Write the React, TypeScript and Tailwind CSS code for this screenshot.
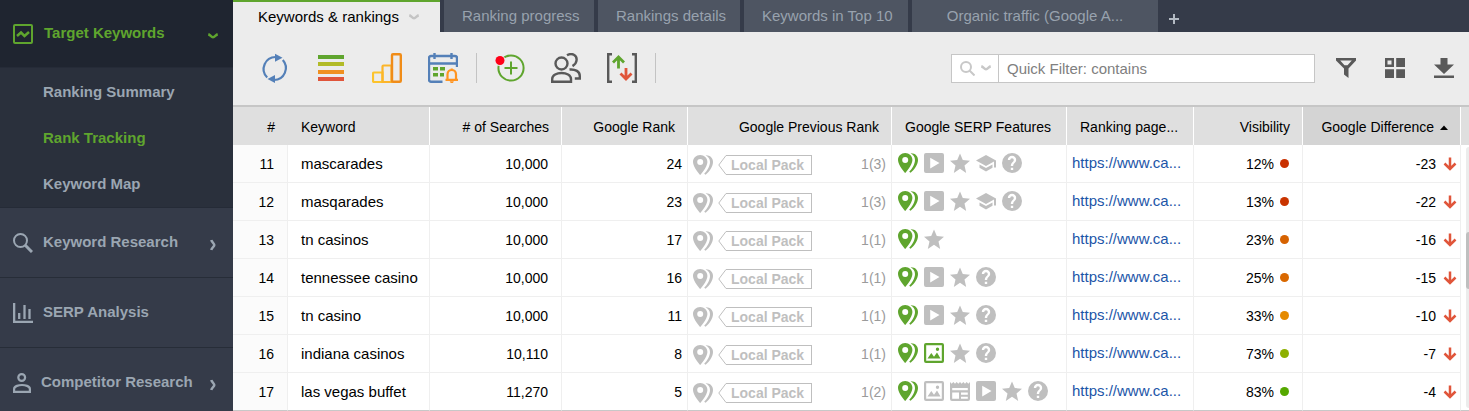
import { ReactNode } from "react";
import clsx from "clsx";

type Feature = "pins" | "image" | "news" | "video" | "star" | "school" | "help";

interface Row {
  id: number;
  keyword: string;
  searches: string;
  rank: number;
  previous: string;
  features: Feature[];
  active: Feature[];
  visibility: number;
  color: string;
  difference: number;
}

const rows: Row[] = [
  { id: 11, keyword: "mascarades", searches: "10,000", rank: 24, previous: "1(3)", features: ["pins", "video", "star", "school", "help"], active: ["pins"], visibility: 12, color: "bg-[#c93000]", difference: -23 },
  { id: 12, keyword: "masqarades", searches: "10,000", rank: 23, previous: "1(3)", features: ["pins", "video", "star", "school", "help"], active: ["pins"], visibility: 13, color: "bg-[#c93400]", difference: -22 },
  { id: 13, keyword: "tn casinos", searches: "10,000", rank: 17, previous: "1(1)", features: ["pins", "star"], active: ["pins"], visibility: 23, color: "bg-[#d66200]", difference: -16 },
  { id: 14, keyword: "tennessee casino", searches: "10,000", rank: 16, previous: "1(1)", features: ["pins", "video", "star", "help"], active: ["pins"], visibility: 25, color: "bg-[#d96800]", difference: -15 },
  { id: 15, keyword: "tn casino", searches: "10,000", rank: 11, previous: "1(1)", features: ["pins", "video", "star", "help"], active: ["pins"], visibility: 33, color: "bg-[#e58a00]", difference: -10 },
  { id: 16, keyword: "indiana casinos", searches: "10,110", rank: 8, previous: "1(1)", features: ["pins", "image", "star", "help"], active: ["pins", "image"], visibility: 73, color: "bg-[#8db000]", difference: -7 },
  { id: 17, keyword: "las vegas buffet", searches: "11,270", rank: 5, previous: "1(2)", features: ["pins", "image", "news", "video", "star", "help"], active: ["pins"], visibility: 83, color: "bg-[#55a800]", difference: -4 },
];

const featurePaths: Record<Feature, string> = {
  pins: "M7.2 0C3.2 0 0 3.1 0 7c0 5.2 7.2 13 7.2 13s7.2-7.8 7.2-13c0-3.9-3.2-7-7.2-7zm0 10a3 3 0 1 1 0-6 3 3 0 0 1 0 6zM12.6.3C17 0 20 3 20 7c0 4.8-3.8 9.8-7.4 12.8l-1.4-1C14.2 15.6 17 11 17 7c0-3-1.800-5.400-4.400-6.700z",
  image: "M2 0h16a2 2 0 0 1 2 2v16a2 2 0 0 1-2 2H2a2 2 0 0 1-2-2V2a2 2 0 0 1 2-2zm.2 2.200v15.600h15.600V2.200zM3.500 15.500l3.800-5.500 2.700 3.700 3-4.200 3.500 6zM13.500 4.500a1.700 1.700 0 1 1 0 3.400 1.700 1.700 0 0 1 0-3.400z",
  news: "M0 1l1.700 1.700L3.300 1 5 2.700 6.700 1l1.600 1.700L10 1l1.700 1.700L13.300 1 15 2.700 16.700 1l1.600 1.700L20 1v17a2 2 0 0 1-2 2H2a2 2 0 0 1-2-2zM2.200 7v2.200h15.600V7zm0 4.500v6.300H9v-6.300zm8.800 0v2.200h6.800v-2.200zm0 4.300v2h6.800v-2z",
  video: "M2 0h16a2 2 0 0 1 2 2v16a2 2 0 0 1-2 2H2a2 2 0 0 1-2-2V2a2 2 0 0 1 2-2zm4.200 4.700v10.800l9.300-5.400z",
  star: "M10 15.800L16.200 20l-1.700-7.500L20 7.700l-7.200-.6L10 .5 7.200 7.100 0 7.700l5.500 4.800L3.800 20z",
  school: "M3.500 11.500v3.300L10 18.500l6.500-3.700v-3.300L10 15zM10 2L0 7.500l10 5.500 8-4.400v5.900h2V7.500z",
  help: "M10 0a10 10 0 1 0 0 20 10 10 0 0 0 0-20zm1.200 17H8.800v-2.300h2.400zm2.070-7.750l-.9.920C11.650 10.900 11.200 11.500 11.200 13H8.800v-.5c0-1.100.450-2.100 1.170-2.830l1.240-1.260c.370-.360.590-.860.590-1.410a1.800 1.800 0 1 0-3.600 0H5.800a4.200 4.200 0 1 1 8.400 0c0 .880-.360 1.680-.930 2.250z",
};

const featureNames: Record<Feature, string> = {
  pins: "Local pack",
  image: "Images",
  news: "News",
  video: "Video",
  star: "Reviews",
  school: "Knowledge",
  help: "Answers",
};

const FeatureIcon = ({ name, active }: { name: Feature; active?: boolean }) => (
  <svg
    viewBox="0 0 20 20"
    role="img"
    aria-label={featureNames[name]}
    fillRule="evenodd"
    className={clsx("size-5 shrink-0 fill-current", active ? "text-[#5fa52e]" : "text-[#bfbfbf]")}
  >
    <path d={featurePaths[name]} />
  </svg>
);

const Chevron = ({ className }: { className?: string }) => (
  <svg viewBox="0 0 10 6" className={clsx("h-[6px] w-[10px] fill-none stroke-current", className)} strokeWidth="2.500">
    <path d="M.3 1.200C2 1.700 3.300 4.200 5 4.200S8 1.700 9.700 1.200" />
  </svg>
);

const ToolButton = ({ label, children }: { label: string; children: ReactNode }) => (
  <button aria-label={label} className="size-[30px] shrink-0 cursor-pointer">
    <svg viewBox="0 0 30 30" fill="none" className="size-[30px]">
      {children}
    </svg>
  </button>
);

const SmallButton = ({ label, children }: { label: string; children: ReactNode }) => (
  <button aria-label={label} className="size-5 shrink-0 cursor-pointer text-[#595959]">
    <svg viewBox="0 0 20 20" fill="currentColor" fillRule="evenodd" className="size-5">
      {children}
    </svg>
  </button>
);

const SectionLink = ({ label, icon, expandable }: { label: string; icon: ReactNode; expandable?: boolean }) => (
  <a href="#" className="flex h-[70px] shrink-0 items-center gap-[10px] border-b border-[#272d38] pr-[17px] pl-[13px]">
    {icon}
    <span className="flex-1">{label}</span>
    {expandable && (
      <svg viewBox="0 0 6 12" fill="none" stroke="currentColor" strokeWidth="2.500" className="mt-1 h-3 w-[6px]">
        <path d="M1.300 1C1.700 3 4.300 4.500 4.300 6S1.700 9 1.300 11" />
      </svg>
    )}
  </a>
);

const Sidebar = () => (
  <nav className="flex w-[233px] shrink-0 flex-col bg-[#353b49] text-[15px] font-bold text-[#9ba6b2]">
    <a href="#" className="flex h-[68px] shrink-0 items-center border-b border-[#252b37] bg-[#1f2530] pr-[15px] pl-[13px] text-[#5fa52e]">
      <svg viewBox="0 0 20 20" fill="none" stroke="currentColor" strokeWidth="2" className="mr-[11px] size-5">
        <rect x="1" y="1" width="18" height="18" rx="1" />
        <path d="M4 12l4-3.500 3.500 3.500L16 8" strokeWidth="2.500" />
      </svg>
      <span className="flex-1">Target Keywords</span>
      <Chevron className="mt-1" />
    </a>
    <div className="flex shrink-0 flex-col border-b border-[#252b37] bg-[#2a303c] pt-px">
      <a href="#" className="flex h-[46px] items-center pl-[43px]">Ranking Summary</a>
      <a href="#" className="flex h-[46px] items-center pl-[43px] text-[#5fa52e]">Rank Tracking</a>
      <a href="#" className="flex h-[46px] items-center pl-[43px]">Keyword Map</a>
    </div>
    <SectionLink
      label="Keyword Research"
      expandable
      icon={
        <svg viewBox="0 0 20 20" fill="none" stroke="currentColor" strokeWidth="2" className="size-5">
          <circle cx="7.500" cy="7.500" r="6.500" />
          <path d="M12 12l7 7" strokeWidth="3" />
        </svg>
      }
    />
    <SectionLink
      label="SERP Analysis"
      icon={
        <svg viewBox="0 0 20 20" fill="none" stroke="currentColor" strokeWidth="2.300" className="size-5">
          <path d="M1.150 0v18.800H20M6.200 10v6M11.500 2v14M16.500 6v10" />
        </svg>
      }
    />
    <SectionLink
      label="Competitor Research"
      expandable
      icon={
        <svg viewBox="0 0 18 20" fill="none" stroke="currentColor" strokeWidth="2.200" className="h-5 w-[18px]">
          <circle cx="8.700" cy="4.500" r="3.400" />
          <path d="M1.100 18.800V16c0-3 5-4 7.900-4s7.900 1 7.900 4v2.800z" />
        </svg>
      }
    />
  </nav>
);

const Tabs = () => (
  <div className="flex h-8 shrink-0 gap-1 bg-[#353b49] text-[15px] text-[#98a2ae]">
    <button className="flex w-[207px] items-center border-t-2 border-[#5fa52e] bg-[#ececec] pl-[25px] text-black">
      Keywords & rankings
      <Chevron className="ml-[10px] text-[#c4c4c4]" />
    </button>
    <button className="w-[150px] bg-[#4e5562] pl-[18px] text-left">Ranking progress</button>
    <button className="w-[142px] bg-[#4e5562] pl-[18px] text-left">Rankings details</button>
    <button className="w-[164px] bg-[#4e5562] pl-[18px] text-left">Keywords in Top 10</button>
    <button className="w-[246px] bg-[#4e5562]">Organic traffic (Google A...</button>
    <button aria-label="Add tab" className="ml-[6px] pt-[6px] text-[#b3bac3]">
      <svg viewBox="0 0 12 12" fill="none" stroke="currentColor" strokeWidth="2" className="size-3">
        <path d="M6 1v10M1 6h10" />
      </svg>
    </button>
  </div>
);

const Toolbar = () => (
  <div className="flex h-[75px] shrink-0 items-center border-b-2 border-[#c6c6c6] bg-[#ececec] pr-[15px] pb-px pl-[27px]">
    <div className="flex items-center gap-[26px]">
      <ToolButton label="Update rankings">
        <g stroke="#5480b8" strokeWidth="2.200">
          <path d="M7.200 24.500A12 12 0 0 1 16 4M22.800 7A12 12 0 0 1 14 27" />
        </g>
        <path d="M15 .8l7.500 4-7.500 4zM15 22v8l-7.500-4z" fill="#5480b8" />
      </ToolButton>
      <ToolButton label="Row view">
        <path d="M2 4h26" stroke="#5fa52e" strokeWidth="4" />
        <path d="M2 11h26" stroke="#b2bb28" strokeWidth="4" />
        <path d="M2 19h26" stroke="#f09020" strokeWidth="4" />
        <path d="M2 26h26" stroke="#e0553a" strokeWidth="4" />
      </ToolButton>
      <ToolButton label="Statistics">
        <path d="M10.500 19.500H2a1 1 0 0 0-1 1V28a1 1 0 0 0 1 1h8.500z" stroke="#fcc32c" strokeWidth="2.200" />
        <path d="M19.500 12.500h-8a1 1 0 0 0-1 1V29h9z" stroke="#fcb52a" strokeWidth="2.200" />
        <rect x="20" y="1.200" width="8.800" height="27.600" rx="1" stroke="#f08c18" strokeWidth="2.400" />
      </ToolButton>
      <ToolButton label="Schedule">
        <path d="M14.500 28.800H3a2 2 0 0 1-2-2V5a2 2 0 0 1 2-2h24a2 2 0 0 1 2 2v9M1 10.500h28M6.500 0v6M23.500 0v6" stroke="#5480b8" strokeWidth="2.400" />
        <path d="M5 14h5v3.500H5zM12 14h5v3.500h-5zM5 20h5v3.500H5zM12 20h4v3.500h-4z" fill="#5fa52e" />
        <path d="M19.500 26.500v-5c0-6 8.500-6 8.500 0v5M17.500 26.800h12.500M23.750 17.500v-2" stroke="#ff9420" strokeWidth="2.200" />
        <path d="M21.700 28.200h4.200l-1 1.800h-2.200z" fill="#ff9420" />
      </ToolButton>
    </div>
    <span className="mx-[18px] h-[30px] w-px bg-[#c3c3c3]" />
    <div className="flex items-center gap-[26px]">
      <ToolButton label="Add keywords">
        <circle cx="16" cy="15" r="12.600" stroke="#5fa52e" strokeWidth="2" />
        <path d="M16 8.500v13M9.500 15h13" stroke="#5fa52e" strokeWidth="2" />
        <circle cx="5" cy="7.500" r="5.500" fill="#ececec" />
        <circle cx="5" cy="7.500" r="4.500" fill="#ff0018" />
      </ToolButton>
      <ToolButton label="Competitors">
        <g stroke="#595959" strokeWidth="2.400">
          <circle cx="10.500" cy="10.500" r="6" />
          <path d="M1.200 28.800V26c0-8 18.800-8 18.800 0v2.800zM16 2.300c5-3 10 0 9.600 4.700-.2 3-1.600 4.600-4.100 6.100M18.500 16.500c6-.5 10.300 2 10.300 6.500v2.500h-5" />
        </g>
      </ToolButton>
      <ToolButton label="Compare progress">
        <path d="M5 1.200H1.200v27.600H5M25 1.200h3.800v27.600H25" stroke="#595959" strokeWidth="2.400" />
        <path d="M11.500 15.500V4M6 9.500L11.500 4l5.500 5.500" stroke="#5fa52e" strokeWidth="2.800" />
        <path d="M19 15v11M13.500 20.500L19 26l5.500-5.500" stroke="#e0553a" strokeWidth="2.800" />
      </ToolButton>
    </div>
    <span className="mx-[18px] h-[30px] w-px bg-[#c3c3c3]" />

    <div className="mr-[21px] ml-auto flex h-[29px] w-[364px] border border-[#c6c6c6] bg-white">
      <button aria-label="Filter options" className="flex w-[47px] shrink-0 items-center gap-[6px] border-r border-[#c6c6c6] pl-2 text-[#c8c8c8]">
        <svg viewBox="0 0 15 15" fill="none" stroke="currentColor" strokeWidth="2" className="size-[15px]">
          <circle cx="6" cy="6" r="5" />
          <path d="M9.500 9.500l5 5" />
        </svg>
        <Chevron />
      </button>
      <input
        type="text"
        aria-label="Quick Filter"
        placeholder="Quick Filter: contains"
        className="min-w-0 flex-1 px-2 pt-[3px] font-['Liberation_Sans',Arial,sans-serif] text-[15px] outline-none placeholder:text-[#808080]"
      />
    </div>
    <div className="flex items-center gap-[29px]">
      <SmallButton label="Filter">
        <path d="M0 0h20v2.500l-7.500 8V20L8 16.500v-6L0 2.500zm4.200 2.400l4.300 4.800h3l4.300-4.800z" />
      </SmallButton>
      <SmallButton label="Workspaces">
        <path d="M0 0h9v9H0zm2.500 2.500v4h4v-4zM11.200 0H20v9h-8.800zM0 11.200h9V20H0zM11.200 11.200H20V20h-8.800z" />
      </SmallButton>
      <SmallButton label="Download">
        <path d="M6.500 0h7v6.500H20L10 16 0 6.500h6.500zM0 17.500h20V20H0z" />
      </SmallButton>
    </div>
  </div>
);

const RankTable = () => (
  <table className="w-full table-fixed border-separate border-spacing-0 text-right text-sm text-black">
    <colgroup>
      <col className="w-[55px]" />
      <col />
      <col className="w-[132px]" />
      <col className="w-[126px]" />
      <col className="w-[204px]" />
      <col className="w-[175px]" />
      <col className="w-[127px]" />
      <col className="w-[109px]" />
      <col className="w-[158px]" />
    </colgroup>
    <thead>
      <tr className="h-[38px] bg-[#dfdfdf] *:border-r *:border-white *:pt-[2px] *:font-normal *:whitespace-nowrap">
        <th className="border-[#dfdfdf]! pr-3">#</th>
        <th className="pl-[13px] text-left">Keyword</th>
        <th className="pr-3"># of Searches</th>
        <th className="pr-3">Google Rank</th>
        <th className="pr-3">Google Previous Rank</th>
        <th className="pl-[13px] text-left">Google SERP Features</th>
        <th className="pl-[13px] text-left">Ranking page...</th>
        <th className="pr-3">Visibility</th>
        <th aria-sort="ascending" className="bg-[#d4d4d4] pr-3">
          <span className="inline-flex items-center gap-[6px]">
            Google Difference
            <svg viewBox="0 0 8 5" className="h-[5px] w-2">
              <path d="M0 5l4-4.500L8 5z" />
            </svg>
          </span>
        </th>
      </tr>
    </thead>
    <tbody>
      {rows.map((row) => (
        <tr
          key={row.id}
          className="h-[38px] *:border-r *:border-b *:border-[#efefef] *:py-0 last:*:border-b-[#c8c8c8]"
        >
          <td className="bg-[#fbfbfb] pr-[13px]">{row.id}</td>
          <td className="pl-[13px] text-left text-[15px]">{row.keyword}</td>
          <td className="pr-[13px]">{row.searches}</td>
          <td className="pr-[5px]">{row.rank}</td>
          <td className="pr-[5px] pl-[5px]">
            <div className="flex items-center text-[#9b9b9b]">
              <span className="mt-[3px] flex items-center gap-[5px]">
                <FeatureIcon name="pins" />
                <span className="flex h-5 text-[#bfbfbf]">
                  <svg viewBox="0 0 8 20" fill="#fff" stroke="currentColor" className="h-5 w-2">
                    <path d="M8 .5L.8 10 8 19.500" />
                  </svg>
                  <span className="flex items-center border border-l-0 border-current pr-[7px] pl-[5px] text-sm font-bold">
                    Local Pack
                  </span>
                </span>
              </span>
              <span className="ml-auto">{row.previous}</span>
            </div>
          </td>
          <td className="pb-[2px]! pl-[6px]">
            <div className="flex gap-[6px]">
              {row.features.map((name) => (
                <FeatureIcon key={name} name={name} active={row.active.includes(name)} />
              ))}
            </div>
          </td>
          <td className="pb-[2px]! pl-[5px] text-left text-[15px]">
            <a href="#" className="text-[#1c55a8]">https://www.ca...</a>
          </td>
          <td className="pr-[13px]">
            <div className="flex items-center justify-end gap-[6px]">
              {row.visibility}%
              <span className={clsx("size-[9px] rounded-full", row.color)} />
            </div>
          </td>
          <td className="pr-[3px]">
            <div className="flex items-center justify-end gap-[7px]">
              {row.difference}
              <svg viewBox="0 0 14 14" fill="none" stroke="#e0553a" strokeWidth="2.500" className="size-[14px]">
                <path d="M7 .5V12M1.500 6.500L7 12l5.500-5.500" />
              </svg>
            </div>
          </td>
        </tr>
      ))}
    </tbody>
  </table>
);

export default function App() {
  return (
    <div className="flex h-screen overflow-hidden bg-white font-['Liberation_Sans',Arial,sans-serif]">
      <Sidebar />
      <main className="flex min-w-0 flex-1 flex-col">
        <Tabs />
        <Toolbar />
        <div className="flex">
          <div className="min-w-0 flex-1">
            <RankTable />
          </div>
          <div className="flex w-2 flex-col items-end border-b border-[#c8c8c8]">
            <div className="h-[38px] w-full bg-[#dfdfdf]" />
            <div className="mt-[2px] mb-[2px] w-[3px] flex-1 rounded-l bg-[#ececec] pt-[85px]">
              <div className="h-[57px] rounded-l bg-[#bfbfbf]" />
            </div>
          </div>
        </div>
      </main>
    </div>
  );
}
